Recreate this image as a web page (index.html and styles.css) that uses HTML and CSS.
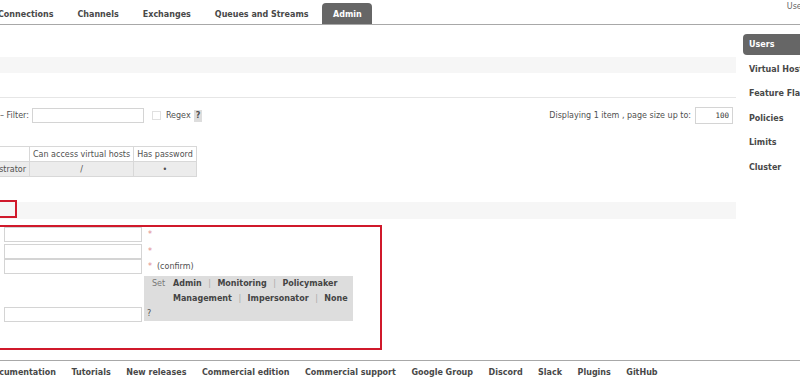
FILE: index.html
```html
<!DOCTYPE html>
<html lang="en">
<head>
  <meta charset="UTF-8">
  <meta name="viewport" content="width=device-width, initial-scale=1.0">
  <title>RabbitMQ Management</title>
  <link rel="stylesheet" href="styles.css">
</head>
<body>
  <div class="header">
    <ul class="tabs">
      <li>Connections</li>
      <li>Channels</li>
      <li>Exchanges</li>
      <li>Queues and Streams</li>
      <li class="active">Admin</li>
    </ul>
    <div class="user">User guest</div>
  </div>

  <div class="layout">
    <div class="main">
      <div class="band"></div>
      <div class="rule"></div>

      <div class="filter-row">
        <div class="filter">
          <span>– Filter:</span>
          <input type="text" class="filter-input">
          <label class="regex"><span class="check"></span>Regex</label>
          <span class="help">?</span>
        </div>
        <div class="paging">
          <span>Displaying 1 item , page size up to:</span>
          <input type="text" class="page-size" value="100">
        </div>
      </div>

      <table class="users">
        <tr>
          <th class="first">Tags</th>
          <th>Can access virtual hosts</th>
          <th>Has password</th>
        </tr>
        <tr>
          <td class="first">administrator</td>
          <td>/</td>
          <td>•</td>
        </tr>
      </table>

      <div class="band section">
        <span class="marker"></span>
      </div>

      <div class="add-user">
        <div class="row">
          <input type="text" class="field">
          <span class="req">*</span>
        </div>
        <div class="row second">
          <input type="password" class="field">
          <span class="req">*</span>
        </div>
        <div class="row">
          <input type="password" class="field">
          <span class="req">*</span><span class="note">(confirm)</span>
        </div>
        <div class="row tags-row">
          <input type="text" class="field">
          <div class="tags">
            <div class="tag-line">
              <span class="set">Set</span>
              <div class="tag-links">
                <a>Admin</a><span class="sep">|</span><a>Monitoring</a><span class="sep">|</span><a>Policymaker</a><br>
                <a>Management</a><span class="sep">|</span><a>Impersonator</a><span class="sep">|</span><a>None</a>
              </div>
            </div>
            <div class="tag-help">?</div>
          </div>
        </div>
      </div>
    </div>

    <ul class="sidebar">
      <li class="active">Users</li>
      <li>Virtual Hosts</li>
      <li>Feature Flags</li>
      <li>Policies</li>
      <li>Limits</li>
      <li>Cluster</li>
    </ul>
  </div>

  <div class="footer">
    <a class="doc">Documentation</a>
    <a>Tutorials</a>
    <a>New releases</a>
    <a>Commercial edition</a>
    <a>Commercial support</a>
    <a>Google Group</a>
    <a>Discord</a>
    <a>Slack</a>
    <a>Plugins</a>
    <a>GitHub</a>
  </div>
</body>
</html>
```

FILE: styles.css
```css
body {
  margin: 0;
  padding: 0;
  font-family: 'DejaVu Sans', Verdana, sans-serif;
  font-size: 8px;
  color: #505050;
  background: #ffffff;
  overflow: hidden;
  width: 800px;
  height: 383px;
}

ul {
  list-style: none;
  margin: 0;
  padding: 0;
}

/* top tabs */
.header {
  display: flex;
  height: 24px;
  border-bottom: 1px solid #a8a8a8;
}

.tabs {
  display: flex;
  margin-left: -14px;
}

.tabs li {
  margin-top: 3px;
  height: 21px;
  padding: 1px 12px 0;
  box-sizing: border-box;
  display: flex;
  align-items: center;
  font-size: 8px;
  font-weight: bold;
  color: #484848;
}

.tabs li.active {
  background: #666666;
  color: #ffffff;
  border-radius: 4px 4px 0 0;
  padding: 1px 10.5px 0;
  margin-left: 2px;
}

.user {
  margin-left: auto;
  margin-right: -30px;
  padding-top: 2px;
  color: #666666;
}

/* page body */
.layout {
  display: flex;
}

.main {
  width: 736px;
  flex-shrink: 0;
}

.band {
  margin-top: 32px;
  height: 16px;
  background: #f6f6f6;
}

.rule {
  margin-top: 24px;
  height: 1px;
  background: #e6e6e6;
}

.filter-row {
  margin-top: 9px;
  height: 17px;
  display: flex;
  justify-content: space-between;
  align-items: center;
  padding-right: 3px;
}

.filter,
.paging {
  display: flex;
  align-items: center;
}

.filter-input {
  margin: 0 0 0 3px;
  width: 112px;
  height: 15px;
  box-sizing: border-box;
  border: 1px solid #d4d4d4;
  padding: 0;
}

.regex {
  display: flex;
  align-items: center;
  margin-left: 8px;
}

.check {
  width: 7px;
  height: 7px;
  border: 1px solid #e0e0e0;
  margin-right: 5px;
}

.help {
  margin-left: 3px;
  background: #dddddd;
  padding: 1px 2px;
  font-weight: bold;
  line-height: 10px;
}

.page-size {
  margin: 0 0 0 4px;
  width: 38px;
  height: 17px;
  box-sizing: border-box;
  border: 1px solid #d4d4d4;
  padding: 0 3px 0 0;
  text-align: right;
  font-family: 'DejaVu Sans Mono', monospace;
  font-size: 7.5px;
  color: #333333;
}

.users {
  margin: 22px 0 0 -42px;
  border-collapse: collapse;
}

.users th,
.users td {
  border: 1px solid #d8d8d8;
  height: 14px;
  padding: 0 3px;
  font-weight: normal;
  text-align: center;
  white-space: nowrap;
}

.users td {
  background: #ececec;
}

.users .first {
  width: 64px;
  text-align: right;
}

.users th.first {
  color: transparent;
}

.band.section {
  position: relative;
  margin-top: 25px;
  height: 17px;
}

.marker {
  position: absolute;
  left: -12px;
  top: -2px;
  width: 25px;
  height: 14px;
  border: 2px solid #d0192b;
}

/* add user form */
.add-user {
  margin: 6px 0 0 -10px;
  width: 376px;
  border: 2px solid #d0192b;
  padding: 0 0 26px 12px;
}

.row {
  display: flex;
  align-items: center;
  height: 15px;
}

.row.second {
  margin-top: 2px;
}

.field {
  margin: 0;
  width: 138px;
  height: 15px;
  box-sizing: border-box;
  border: 1px solid #d4d4d4;
  padding: 0;
}

.req {
  margin-left: 6px;
  color: #e08a8a;
}

.note {
  margin-left: 5px;
}

.tags-row {
  height: auto;
  margin-top: 2px;
  align-items: flex-end;
}

.tags {
  margin: 0 0 1px 2px;
  width: 206px;
  padding-left: 3px;
  background: #dddddd;
  line-height: 15px;
}

.tag-line {
  display: flex;
}

.set {
  margin-left: 5px;
  width: 21px;
  color: #777777;
}

.tag-links a {
  font-weight: bold;
  color: #444444;
}

.sep {
  margin: 0 6.5px;
  color: #aaaaaa;
}

/* side menu */
.sidebar {
  margin-left: 7px;
  margin-top: 9px;
  flex: 1;
}

.sidebar li {
  height: 21px;
  margin-bottom: 3.5px;
  padding-left: 6px;
  display: flex;
  align-items: center;
  font-size: 8px;
  font-weight: bold;
  color: #484848;
  white-space: nowrap;
}

.sidebar li.active {
  background: #666666;
  color: #ffffff;
  border-radius: 4px 0 0 4px;
}

/* footer */
.footer {
  margin-top: 10px;
  border-top: 1px solid #a8a8a8;
  height: 22px;
  display: flex;
  align-items: center;
  white-space: nowrap;
}

.footer a {
  margin-right: 15.5px;
  font-size: 8px;
  font-weight: bold;
  color: #484848;
}

.footer .doc {
  margin-left: -13px;
}
```
